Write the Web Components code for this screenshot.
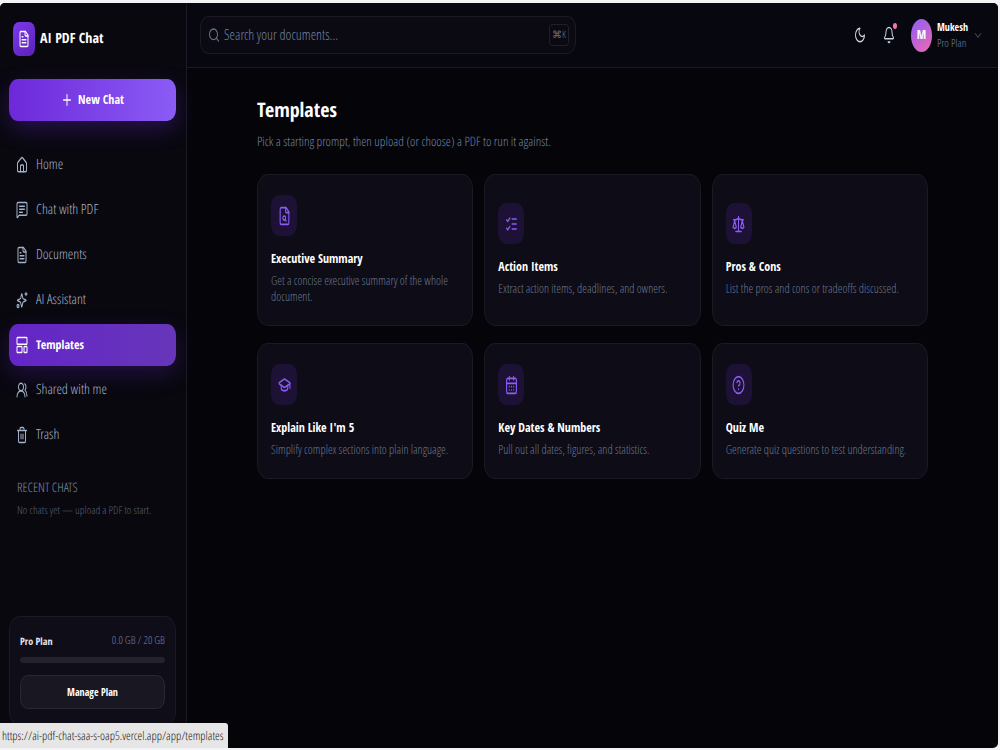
<!DOCTYPE html>
<html lang="en">
<head>
  <meta charset="utf-8">
  <meta name="viewport" content="width=device-width, initial-scale=1">
  <title>AI PDF Chat - Templates</title>
  <style>
    html, body {
      margin: 0;
      height: 100%;
    }

    body {
      --line: #1b1a24;
      --violet: #8b5cf6;
      --muted: #7182a0;
      --bold: "Open Sans Condensed", "Roboto Condensed", Roboto, sans-serif;
      --regular: "Open Sans Condensed Light", "Roboto Condensed", Roboto, sans-serif;
      box-sizing: border-box;
      padding: 3px 2px 2px 0;
      background: #f3f2f5;
      font: 12px/16px var(--regular);
      text-rendering: geometricPrecision;
      color: #fff;
    }
  </style>
</head>
<body>
  <app-shell>
    <app-sidebar slot="sidebar">
      <nav-item icon="home" href="#home">Home</nav-item>
      <nav-item icon="chat" href="#chat">Chat with PDF</nav-item>
      <nav-item icon="file" href="#documents">Documents</nav-item>
      <nav-item icon="sparkles" href="#assistant">AI Assistant</nav-item>
      <nav-item icon="layout" href="#templates" active>Templates</nav-item>
      <nav-item icon="users" href="#shared">Shared with me</nav-item>
      <nav-item icon="trash" href="#trash">Trash</nav-item>
      <plan-card slot="footer" plan="Pro Plan" used="0.0" total="20"></plan-card>
    </app-sidebar>
    <app-header slot="header" user="Mukesh" plan="Pro Plan"></app-header>
    <template-list>
      <template-card icon="filesearch" heading="Executive Summary">Get a concise executive summary of the whole document.</template-card>
      <template-card icon="checks" heading="Action Items">Extract action items, deadlines, and owners.</template-card>
      <template-card icon="scale" heading="Pros &amp; Cons">List the pros and cons or tradeoffs discussed.</template-card>
      <template-card icon="cap" heading="Explain Like I'm 5">Simplify complex sections into plain language.</template-card>
      <template-card icon="calendar" heading="Key Dates &amp; Numbers">Pull out all dates, figures, and statistics.</template-card>
      <template-card icon="help" heading="Quiz Me">Generate quiz questions to test understanding.</template-card>
    </template-list>
  </app-shell>
  <status-bubble>https://ai-pdf-chat-saa-s-oap5.vercel.app/app/templates</status-bubble>

  <script>
    const icons = {
      home: '<path d="M15 21v-8a1 1 0 0 0-1-1h-4a1 1 0 0 0-1 1v8"/><path d="M3 10a2 2 0 0 1 .7-1.5l7-6a2 2 0 0 1 2.6 0l7 6A2 2 0 0 1 21 10v9a2 2 0 0 1-2 2H5a2 2 0 0 1-2-2z"/>',
      chat: '<path d="M22 17a2 2 0 0 1-2 2H6.800a2 2 0 0 0-1.400.600l-2.200 2.200A.7.7 0 0 1 2 21.300V4a2 2 0 0 1 2-2h16a2 2 0 0 1 2 2z"/><path d="M7 7h10M7 11h10M7 15h6"/>',
      file: '<path d="M15 2H6a2 2 0 0 0-2 2v16a2 2 0 0 0 2 2h12a2 2 0 0 0 2-2V7z"/><path d="M14 2v4a2 2 0 0 0 2 2h4M10 9H8M16 13H8M16 17H8"/>',
      sparkles: '<path d="M11 20.500 9.500 16A3 3 0 0 0 8 14.500L3.500 13a.5.5 0 0 1 0-1L8 10.500A3 3 0 0 0 9.500 9L11 4.500a.5.5 0 0 1 1 0L13.500 9a3 3 0 0 0 1.500 1.500l4.500 1.500a.5.5 0 0 1 0 1L15 14.500a3 3 0 0 0-1.500 1.500L12 20.500a.5.5 0 0 1-1 0z"/><path d="M20 2v4M22 4h-4"/><circle cx="4" cy="20" r="2"/>',
      layout: '<rect x="2" y="2" width="20" height="9" rx="1"/><rect x="2" y="14" width="10" height="8" rx="1"/><rect x="16" y="14" width="6" height="8" rx="1"/>',
      users: '<path d="M18 21a8 8 0 0 0-16 0"/><circle cx="10" cy="8" r="5"/><path d="M22 20c0-3.370-2-6.500-4-8a5 5 0 0 0-.450-8.300"/>',
      trash: '<path d="M3 6h18M19 6v14a2 2 0 0 1-2 2H7a2 2 0 0 1-2-2V6M8 6V4a2 2 0 0 1 2-2h4a2 2 0 0 1 2 2v2M10 11v6M14 11v6"/>',
      plus: '<path d="M5 12h14M12 5v14"/>',
      search: '<circle cx="11" cy="11" r="8"/><path d="m21 21-4.300-4.300"/>',
      moon: '<path d="M12 3a6 6 0 0 0 9 9 9 9 0 1 1-9-9z"/>',
      bell: '<path d="M10.300 21a2 2 0 0 0 3.400 0"/><path d="M3.300 15.300A1 1 0 0 0 4 17h16a1 1 0 0 0 .700-1.700C19.400 14 18 12.500 18 8A6 6 0 0 0 6 8c0 4.500-1.400 6-2.700 7.300z"/>',
      chevron: '<path d="m4 7 8 10 8-10"/>',
      filesearch: '<path d="M15 2H6a2 2 0 0 0-2 2v16a2 2 0 0 0 2 2h12a2 2 0 0 0 2-2V7z"/><path d="M14 2v4a2 2 0 0 0 2 2h4"/><circle cx="11.500" cy="14.500" r="2.500"/><path d="m13.300 16.300 1.700 1.700"/>',
      checks: '<path d="m3 17 2 2 4-4M3 7l2 2 4-4M13 6h8M13 12h8M13 18h8"/>',
      scale: '<path d="m16 16 3-8 3 8a5 5 0 0 1-6 0zM2 16l3-8 3 8a5 5 0 0 1-6 0zM7 21h10M12 3v18M3 7h2c2 0 5-1 7-2 2 1 5 2 7 2h2"/>',
      cap: '<path d="M21.400 10.900a1 1 0 0 0 0-1.800L12.800 5.200a2 2 0 0 0-1.600 0L2.600 9.100a1 1 0 0 0 0 1.800l8.600 3.900a2 2 0 0 0 1.600 0z"/><path d="M22 10v6M6 12.500V16a6 3 0 0 0 12 0v-3.500"/>',
      calendar: '<path d="M8 2v4M16 2v4M3 10h18"/><rect x="3" y="4" width="18" height="18" rx="2"/><path d="M8 14h.01M12 14h.01M16 14h.01M8 18h.01M12 18h.01M16 18h.01"/>',
      help: '<circle cx="12" cy="12" r="10"/><path d="M9.100 9a3 3 0 0 1 5.800 1c0 2-3 3-3 3M12 17h.01"/>'
    }

    class Icon extends HTMLElement {
      constructor () {
        super()
        this.shadow = this.attachShadow({ mode: 'open' })
      }

      connectedCallback () {
        this.shadow.innerHTML =
        /* html */ `
          <style>
            :host {
              display: block;
              flex: none;
              width: var(--icon-width, 12px);
              height: var(--icon-height, 18px);
            }

            svg {
              display: block;
              width: 100%;
              height: 100%;
              fill: none;
              stroke: currentColor;
              stroke-width: 2;
              stroke-linecap: round;
              stroke-linejoin: round;
            }
          </style>
          <svg viewBox="0 0 24 24" preserveAspectRatio="none" aria-hidden="true">${icons[this.getAttribute('name')]}</svg>
        `
      }
    }

    class Shell extends HTMLElement {
      constructor () {
        super()
        this.shadow = this.attachShadow({ mode: 'open' })
        this.shadow.innerHTML =
        /* html */ `
          <style>
            :host {
              display: grid;
              grid-template-columns: 187px minmax(0, 1fr);
              grid-template-rows: auto minmax(0, 1fr);
              height: 100%;
              overflow: hidden;
              background: #050509;
              border-radius: 5px;
            }

            ::slotted([slot="sidebar"]) {
              grid-row: 1 / 3;
            }
          </style>
          <slot name="sidebar"></slot>
          <slot name="header"></slot>
          <slot></slot>
        `
      }
    }

    class Sidebar extends HTMLElement {
      constructor () {
        super()
        this.shadow = this.attachShadow({ mode: 'open' })
        this.shadow.innerHTML =
        /* html */ `
          <style>
            :host {
              display: flex;
              flex-direction: column;
              box-sizing: border-box;
              padding: 19px 10px 22px 9px;
              background: #09080f;
              border-right: 1px solid var(--line);
            }

            .brand {
              display: flex;
              align-items: center;
              gap: 5px;
              padding: 0 4px;
              font: bold 14px/20px var(--bold);
            }

            .logo {
              display: grid;
              place-items: center;
              width: 22px;
              height: 34px;
              border-radius: 6px / 8px;
              background: linear-gradient(135deg, #7c3aed, #5b21b6);
            }

            .new-chat {
              display: flex;
              align-items: center;
              justify-content: center;
              gap: 5px;
              height: 42px;
              margin: 23px 0;
              border: none;
              border-radius: 9px / 11px;
              background: linear-gradient(90deg, #6d28d9, #8b5cf6);
              box-shadow: 0 8px 22px rgba(109, 40, 217, 0.3);
              color: #fff;
              font: bold 12px/16px var(--bold);
              cursor: pointer;
            }

            nav {
              display: flex;
              flex-direction: column;
              gap: 3px;
            }

            section {
              padding: 23px 0 23px 8px;
              flex: 1;
            }

            h2 {
              margin: 0 0 8px;
              font: 500 13px/16px var(--regular);
              color: #7b8ba6;
            }

            p {
              margin: 0;
              font-size: 11px;
              color: #526078;
            }
          </style>
          <div class="brand"><span class="logo"><app-icon name="file"></app-icon></span>AI PDF Chat</div>
          <button class="new-chat"><app-icon name="plus"></app-icon>New Chat</button>
          <nav><slot></slot></nav>
          <section>
            <h2>RECENT CHATS</h2>
            <p>No chats yet — upload a PDF to start.</p>
          </section>
          <slot name="footer"></slot>
        `
      }
    }

    class NavItem extends HTMLElement {
      constructor () {
        super()
        this.shadow = this.attachShadow({ mode: 'open' })
      }

      connectedCallback () {
        this.shadow.innerHTML =
        /* html */ `
          <style>
            :host {
              display: block;
            }

            a {
              display: flex;
              align-items: center;
              gap: 8px;
              height: 42px;
              padding: 0 7px;
              border-radius: 9px / 11px;
              color: #a3b2c8;
              font-size: 14px;
              text-decoration: none;
            }

            :host([active]) a {
              background: linear-gradient(90deg, #6425c7, #6636ba);
              box-shadow: 0 8px 22px rgba(109, 40, 217, 0.25);
              color: #fff;
              font: bold 12px/16px var(--bold);
            }
          </style>
          <a href="${this.getAttribute('href')}"><app-icon name="${this.getAttribute('icon')}"></app-icon><span><slot></slot></span></a>
        `
      }
    }

    class PlanCard extends HTMLElement {
      constructor () {
        super()
        this.shadow = this.attachShadow({ mode: 'open' })
      }

      connectedCallback () {
        const used = this.getAttribute('used')
        const total = this.getAttribute('total')
        this.shadow.innerHTML =
        /* html */ `
          <style>
            :host {
              display: flex;
              flex-direction: column;
              padding: 16px 10px;
              border: 1px solid var(--line);
              border-radius: 11px / 15px;
              background: #0f0d18;
              font-size: 11px;
            }

            .row {
              display: flex;
              justify-content: space-between;
              color: var(--muted);
            }

            strong {
              color: #e2e8f0;
              font: bold 10px/16px var(--bold);
            }

            progress {
              appearance: none;
              width: 100%;
              height: 6px;
              margin: 8px 0 12px;
              border: none;
              border-radius: 3px;
              overflow: hidden;
              background: #24222d;
            }

            progress::-webkit-progress-bar {
              background: #24222d;
            }

            progress::-webkit-progress-value {
              background: var(--violet);
            }

            button {
              height: 34px;
              border: 1px solid #292733;
              border-radius: 8px / 10px;
              background: #191722;
              color: #fff;
              font: bold 10px/16px var(--bold);
              cursor: pointer;
            }
          </style>
          <div class="row"><strong>${this.getAttribute('plan')}</strong><span>${used} GB / ${total} GB</span></div>
          <progress value="${used}" max="${total}" aria-label="Storage used"></progress>
          <button>Manage Plan</button>
        `
      }
    }

    class Header extends HTMLElement {
      constructor () {
        super()
        this.shadow = this.attachShadow({ mode: 'open' })
      }

      connectedCallback () {
        const user = this.getAttribute('user')
        this.shadow.innerHTML =
        /* html */ `
          <style>
            :host {
              display: flex;
              align-items: center;
              justify-content: space-between;
              gap: 24px;
              padding: 13px 16px 13px 13px;
              background: #07070f;
              border-bottom: 1px solid var(--line);
            }

            .search {
              display: flex;
              align-items: center;
              gap: 4px;
              flex: 0 1 376px;
              box-sizing: border-box;
              height: 38px;
              padding: 0 6px 0 7px;
              border: 1px solid var(--line);
              border-radius: 9px / 11px;
              background: #0b0a13;
              color: #64748b;
              --icon-height: 16px;
            }

            input {
              flex: 1;
              min-width: 0;
              padding: 0;
              border: none;
              outline: none;
              background: none;
              color: #fff;
              font: 14px/18px var(--regular);
            }

            input::placeholder {
              color: #7182a0;
            }

            kbd {
              padding: 1px 2px 3px;
              border: 1px solid #20202a;
              border-radius: 3px / 5px;
              font: 10px/16px var(--regular);
            }

            .actions {
              display: flex;
              align-items: center;
            }

            button {
              display: flex;
              align-items: center;
              padding: 0;
              border: none;
              background: none;
              color: #cbd5e1;
              font: 11px/15px var(--regular);
              text-align: left;
              cursor: pointer;
            }

            .bell {
              position: relative;
              margin: 0 16px 0 17px;
            }

            .dot {
              position: absolute;
              top: -3px;
              right: -2px;
              width: 4px;
              height: 6px;
              border-radius: 50%;
              background: #f472b6;
            }

            .avatar {
              display: grid;
              place-items: center;
              width: 21px;
              height: 33px;
              margin-right: 5px;
              border-radius: 50%;
              background: linear-gradient(135deg, #8b5cf6, #f06ab0);
              color: #fff;
              font: bold 12px/16px var(--bold);
            }

            .user {
              display: grid;
              margin-right: 6px;
              color: var(--muted);
            }

            strong {
              color: #fff;
              font: bold 10px/15px var(--bold);
            }

            .arrow {
              color: #64748b;
              --icon-width: 8px;
              --icon-height: 9px;
            }
          </style>
          <label class="search">
            <app-icon name="search"></app-icon>
            <input type="search" placeholder="Search your documents..." aria-label="Search your documents">
            <kbd>⌘K</kbd>
          </label>
          <div class="actions">
            <button aria-label="Dark mode"><app-icon name="moon"></app-icon></button>
            <button class="bell" aria-label="Notifications"><app-icon name="bell"></app-icon><span class="dot"></span></button>
            <button>
              <span class="avatar">${user[0]}</span>
              <span class="user"><strong>${user}</strong><span>${this.getAttribute('plan')}</span></span>
              <app-icon class="arrow" name="chevron"></app-icon>
            </button>
          </div>
        `
      }
    }

    class TemplateList extends HTMLElement {
      constructor () {
        super()
        this.shadow = this.attachShadow({ mode: 'open' })
        this.shadow.innerHTML =
        /* html */ `
          <style>
            :host {
              display: block;
              padding: 26px 24px;
              overflow: auto;
            }

            main {
              max-width: 671px;
              margin: 0 auto;
            }

            h1 {
              margin: 0 0 6px;
              font: bold 20px/32px var(--bold);
            }

            p {
              margin: 0 0 24px;
              font-size: 13px;
              line-height: 18px;
              color: var(--muted);
            }

            .grid {
              display: grid;
              grid-template-columns: repeat(3, 1fr);
              gap: 17px 11px;
            }
          </style>
          <main>
            <h1>Templates</h1>
            <p>Pick a starting prompt, then upload (or choose) a PDF to run it against.</p>
            <div class="grid"><slot></slot></div>
          </main>
        `
      }
    }

    class TemplateCard extends HTMLElement {
      constructor () {
        super()
        this.shadow = this.attachShadow({ mode: 'open' })
      }

      connectedCallback () {
        this.shadow.innerHTML =
        /* html */ `
          <style>
            :host {
              display: grid;
            }

            button {
              display: flex;
              flex-direction: column;
              justify-content: center;
              align-items: flex-start;
              padding: 20px 13px;
              border: 1px solid var(--line);
              border-radius: 11px / 15px;
              background: #0e0c16;
              color: #67768f;
              font: 12px/16px var(--regular);
              text-align: left;
              cursor: pointer;
            }

            .tile {
              display: grid;
              place-items: center;
              width: 26px;
              height: 41px;
              margin-bottom: 13px;
              border-radius: 8px / 11px;
              background: #1d1236;
              color: var(--violet);
              --icon-width: 13px;
              --icon-height: 20px;
            }

            strong {
              margin-bottom: 4px;
              font: bold 12px/20px var(--bold);
              color: #fff;
            }
          </style>
          <button>
            <span class="tile"><app-icon name="${this.getAttribute('icon')}"></app-icon></span>
            <strong>${this.getAttribute('heading')}</strong>
            <span><slot></slot></span>
          </button>
        `
      }
    }

    class StatusBubble extends HTMLElement {
      constructor () {
        super()
        this.shadow = this.attachShadow({ mode: 'open' })
        this.shadow.innerHTML =
        /* html */ `
          <style>
            :host {
              position: fixed;
              left: 0;
              bottom: 2px;
              padding: 5px 4px 4px 2px;
              border-radius: 0 3px 0 0;
              background: #e6e6e6;
              color: #202020;
            }
          </style>
          <slot></slot>
        `
      }
    }

    customElements.define('app-icon', Icon)
    customElements.define('app-shell', Shell)
    customElements.define('app-sidebar', Sidebar)
    customElements.define('nav-item', NavItem)
    customElements.define('plan-card', PlanCard)
    customElements.define('app-header', Header)
    customElements.define('template-list', TemplateList)
    customElements.define('template-card', TemplateCard)
    customElements.define('status-bubble', StatusBubble)
  </script>
</body>
</html>
